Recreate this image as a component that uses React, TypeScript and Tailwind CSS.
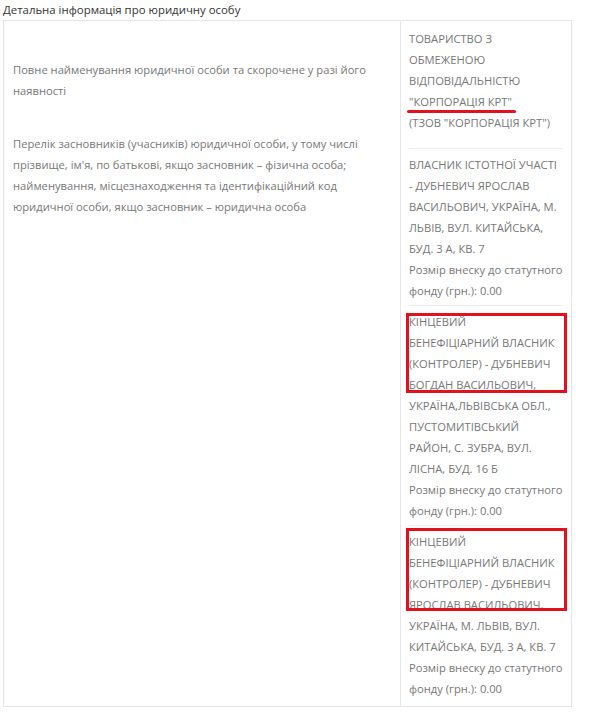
const label1 = ['Повне найменування юридичної особи та скорочене у разі його', 'наявності'];

const label2 = [
  'Перелік засновників (учасників) юридичної особи, у тому числі',
  "прізвище, ім'я, по батькові, якщо засновник – фізична особа;",
  'найменування, місцезнаходження та ідентифікаційний код',
  'юридичної особи, якщо засновник – юридична особа',
];

const owners = [
  {
    boxed: [] as string[],
    boxClass: '',
    lines: [
      'ВЛАСНИК ІСТОТНОЇ УЧАСТІ',
      '- ДУБНЕВИЧ ЯРОСЛАВ',
      'ВАСИЛЬОВИЧ, УКРАЇНА, М.',
      'ЛЬВІВ, ВУЛ. КИТАЙСЬКА,',
      'БУД. 3 А, КВ. 7',
    ],
  },
  {
    boxed: ['КІНЦЕВИЙ', 'БЕНЕФІЦІАРНИЙ ВЛАСНИК', '(КОНТРОЛЕР) - ДУБНЕВИЧ', 'БОГДАН ВАСИЛЬОВИЧ,'],
    boxClass: 'top-[2px] bottom-[2px] -left-[3px] -right-[4px]',
    lines: ['УКРАЇНА,ЛЬВІВСЬКА ОБЛ.,', 'ПУСТОМИТІВСЬКИЙ', 'РАЙОН, С. ЗУБРА, ВУЛ.', 'ЛІСНА, БУД. 16 Б'],
  },
  {
    boxed: ['КІНЦЕВИЙ', 'БЕНЕФІЦІАРНИЙ ВЛАСНИК', '(КОНТРОЛЕР) - ДУБНЕВИЧ', 'ЯРОСЛАВ ВАСИЛЬОВИЧ,'],
    boxClass: '-top-[3px] bottom-[4px] -left-[3px] -right-[4px]',
    lines: ['УКРАЇНА, М. ЛЬВІВ, ВУЛ.', 'КИТАЙСЬКА, БУД. 3 А, КВ. 7'],
  },
];

function Lines({ items }: { items: string[] }) {
  return (
    <>
      {items.map((l, i) => (
        <div key={i} className="whitespace-nowrap">
          {l}
        </div>
      ))}
    </>
  );
}

export default function App() {
  return (
    <div className="w-[602px] h-[727px] bg-white font-['Open_Sans',sans-serif] text-[11.2px] leading-[21px] text-[#777]">
      <div className="h-[20px] pl-[3px] text-[#333] text-[11.4px] leading-[20px]">Детальна інформація про юридичну особу</div>

      <div className="ml-[3px] w-[569px] h-[687px] flex border border-[#e6e6e6]">
        {/* labels */}
        <div className="w-[396px] pl-[9px] pt-[38px]">
          <Lines items={label1} />
          <div className="mt-[32px]">
            <Lines items={label2} />
          </div>
        </div>

        {/* values */}
        <div className="flex-1 border-l border-[#e6e6e6] pt-[7px] px-2">
          <div className="mb-[15px]">
            <Lines items={['ТОВАРИСТВО З', 'ОБМЕЖЕНОЮ', 'ВІДПОВІДАЛЬНІСТЮ']} />
            <div className="whitespace-nowrap">
              <span className="relative">
                "КОРПОРАЦІЯ КРТ"
                <span className="absolute -left-[2px] -right-[4px] bottom-[-4px] h-[3px] rounded-full bg-[#e3111b]" />
              </span>
            </div>
            <div className="whitespace-nowrap">(ТЗОВ "КОРПОРАЦІЯ КРТ")</div>
          </div>

          {owners.map((o, i) => (
            <div key={i} className="border-t border-[#ececec] pt-[5px] pb-[4px]">
              {o.boxed.length > 0 && (
                <div className="relative">
                  <Lines items={o.boxed} />
                  <span className={`absolute border-[3px] border-[#e3111b] ${o.boxClass}`} />
                </div>
              )}
              <Lines items={o.lines} />
              <div className="whitespace-nowrap">Розмір внеску до статутного</div>
              <div className="whitespace-nowrap">фонду (грн.): 0.00</div>
            </div>
          ))}
        </div>
      </div>
    </div>
  );
}
